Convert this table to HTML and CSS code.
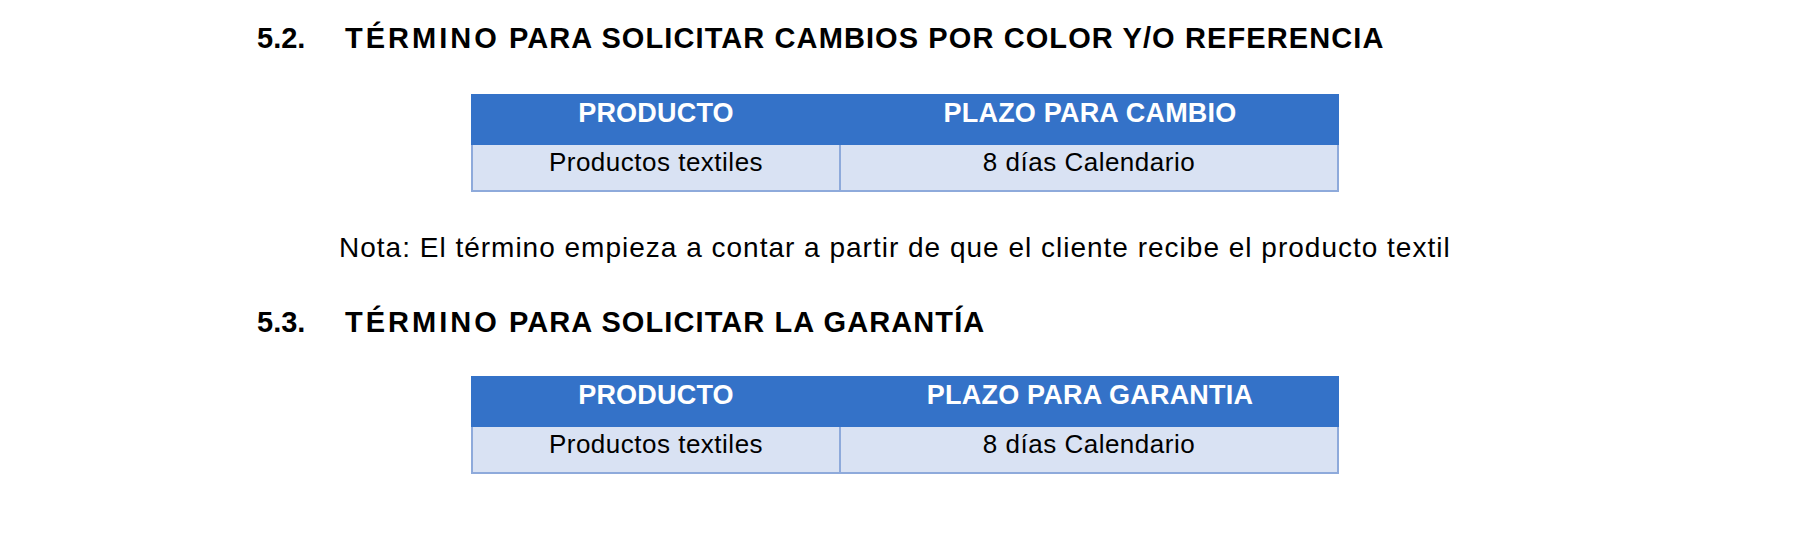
FILE: index.html
```html
<!DOCTYPE html>
<html lang="es">
<head>
<meta charset="utf-8">
<title>Términos</title>
<link rel="stylesheet" href="styles.css">
</head>
<body>
<div class="page">
  <h2 class="heading heading-first"><span class="num">5.2.</span><span class="title"><span class="wide">TÉRMINO</span> PARA SOLICITAR CAMBIOS POR COLOR Y/O REFERENCIA</span></h2>
  <div class="tbl">
    <div class="cell head">PRODUCTO</div>
    <div class="cell head">PLAZO PARA CAMBIO</div>
    <div class="cell body c1">Productos textiles</div>
    <div class="cell body c2">8 días Calendario</div>
  </div>
  <p class="note">Nota: El término empieza a contar a partir de que el cliente recibe el producto textil</p>
  <h2 class="heading"><span class="num">5.3.</span><span class="title"><span class="wide">TÉRMINO</span> PARA SOLICITAR LA GARANTÍA</span></h2>
  <div class="tbl tbl-second">
    <div class="cell head">PRODUCTO</div>
    <div class="cell head">PLAZO PARA GARANTIA</div>
    <div class="cell body c1">Productos textiles</div>
    <div class="cell body c2">8 días Calendario</div>
  </div>
</div>
</body>
</html>
```
FILE: styles.css
```css
* { box-sizing: border-box; }
html, body { margin: 0; padding: 0; background: #ffffff; }
body { font-family: "Liberation Sans", Arial, sans-serif; color: #000; }
.page { padding-top: 18px; width: 1812px; height: 540px; overflow: hidden; }

.heading {
  display: flex;
  margin: 0;
  padding-left: 257px;
  font-size: 29px;
  line-height: 40px;
  height: 40px;
  font-weight: 700;
  white-space: nowrap;
}
.heading .num { width: 88px; flex: none; }
.heading .title { letter-spacing: 1.1px; }
.heading .wide { letter-spacing: 3px; }

.tbl {
  display: grid;
  grid-template-columns: 370px 498px;
  width: 868px;
  margin: 36px 0 0 471px;
}
.tbl-second { margin-top: 34px; }
.cell { text-align: center; white-space: nowrap; }
.head {
  background: #3472c8;
  color: #ffffff;
  font-weight: 700;
  font-size: 27px;
  line-height: 30px;
  height: 51px;
  padding-top: 4px;
  letter-spacing: 0.2px;
}
.body {
  background: #d9e2f3;
  font-size: 26px;
  line-height: 30px;
  height: 47px;
  padding-top: 2px;
  letter-spacing: 0.5px;
  border-bottom: 2px solid #8eaadb;
  border-right: 2px solid #8eaadb;
}
.body.c1 { border-left: 2px solid #8eaadb; }

.note {
  margin: 36px 0 0 339px;
  font-size: 28px;
  line-height: 40px;
  height: 40px;
  letter-spacing: 1px;
  white-space: nowrap;
}
.note + .heading { margin-top: 34px; }
```
